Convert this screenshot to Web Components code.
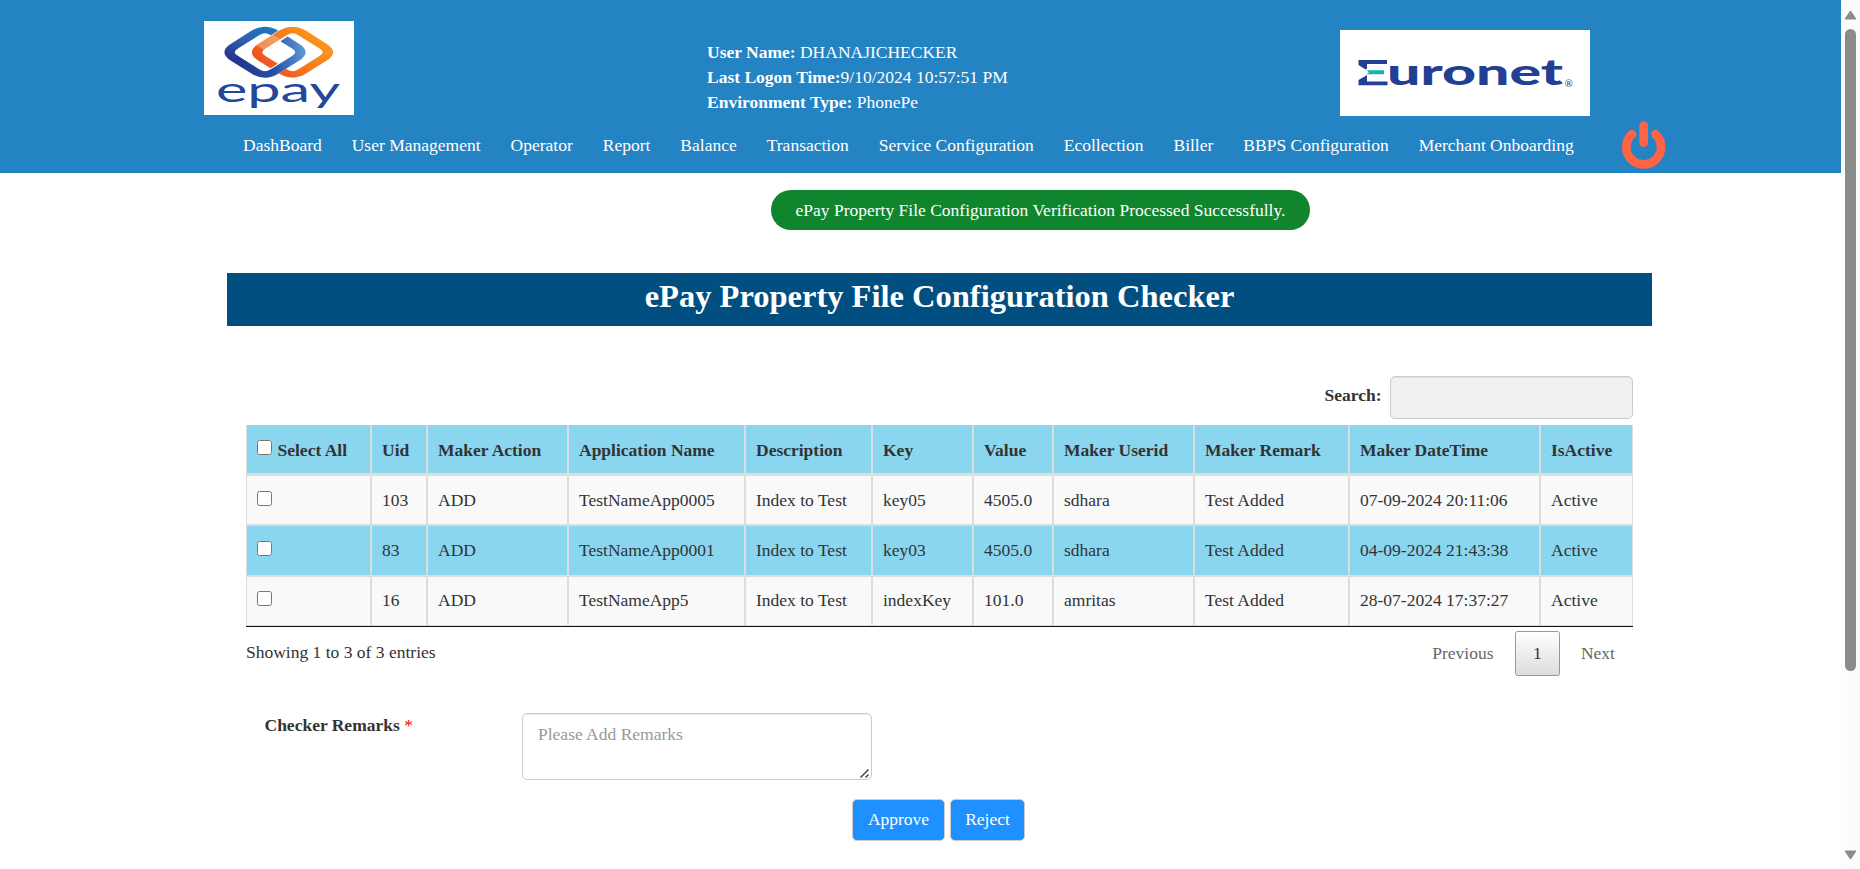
<!DOCTYPE html>
<html lang="en">
<head>
<meta charset="utf-8">
<title>ePay Property File Configuration Checker</title>
<style>
html,body{margin:0;height:100%;overflow:hidden}
body{font:17.5px/25px "Liberation Serif","Times New Roman",serif;color:#333;background:#fff}
</style>
</head>
<body>
<epay-app></epay-app>
<script>
function define(name, html, setup) {
  const t = document.createElement('template');
  t.innerHTML = '<style>*{box-sizing:border-box}:host{display:block}</style>' + html;
  customElements.define(name, class extends HTMLElement {
    constructor() {
      super();
      this.attachShadow({mode: 'open'}).append(t.content.cloneNode(true));
      if (setup) setup(this.shadowRoot, this);
    }
  });
}

define('epay-logo', `
<style>:host{width:150px;height:94px;background:#fff}svg{display:block}</style>
<svg width="150" height="94" viewBox="0 0 150 94" role="img">
  <defs>
    <linearGradient id="b" gradientUnits="userSpaceOnUse" x1="-22" y1="10" x2="8" y2="-22"><stop offset="0" stop-color="#23308c"/><stop offset=".5" stop-color="#2f5fae"/><stop offset="1" stop-color="#1b78c2"/></linearGradient>
    <linearGradient id="c" gradientUnits="userSpaceOnUse" x1="-22" y1="0" x2="24" y2="-4"><stop offset="0" stop-color="#23308c"/><stop offset=".55" stop-color="#2350a2"/><stop offset="1" stop-color="#5c94d2"/></linearGradient>
    <linearGradient id="o" gradientUnits="userSpaceOnUse" x1="-20" y1="12" x2="20" y2="-14"><stop offset="0" stop-color="#ee5023"/><stop offset=".5" stop-color="#f47b20"/><stop offset="1" stop-color="#fb971c"/></linearGradient>
  </defs>
  <g fill="none" stroke-width="6.500">
    <g transform="translate(61 31.200) scale(1.590 1)">
      <path d="M6 -19.300Q0 -25.300 -6 -19.300L-19.300 -6Q-25.300 0 -19.300 6" stroke="url(#b)"/>
      <path d="M-19.600 5.700L-6 19.300Q0 25.300 6 19.300L19.300 6Q25.300 0 19.300 -6L12 -13.300" stroke="url(#c)"/>
    </g>
    <g transform="translate(88.500 31.200) scale(1.590 1)">
      <path d="M-11.500 13.800L-19.300 6Q-25.300 0 -19.300 -6L-6 -19.300Q0 -25.300 6 -19.300L19.300 -6Q25.300 0 19.300 6L6 19.300Q0 25.300 -6.500 18.800" stroke="url(#o)"/>
      <path d="M-20.500 -4.800L-10 -15.300" stroke="#fff" stroke-opacity=".28"/>
    </g>
  </g>
  <text x="12" y="81" font-family="Lato" font-size="35" fill="#23479c" textLength="124" lengthAdjust="spacingAndGlyphs">epay</text>
</svg>`);

define('euronet-logo', `
<style>:host{width:250px;height:86px;background:#fff}svg{display:block}</style>
<svg width="250" height="86" viewBox="0 0 250 86" role="img">
  <g font-family="Lato" fill="#233f94" font-weight="900">
    <text x="14" y="55.200" font-size="36" textLength="209" lengthAdjust="spacingAndGlyphs"><tspan fill="#fff">E</tspan><tspan>uronet</tspan></text>
  </g>
  <path d="M14 28H50V57H14z" fill="#fff"/>
  <path d="M18.500 30H47V34H27V38.500L25.500 39.500L18.500 35zM18.500 55.300H47.500V51.500H33L27 51.500V45L25.500 46L18.500 50z" fill="#233f94"/>
  <path d="M26.500 40.300H44V44.200H26.500L29 42.300z" fill="#12b5ac"/>
  <text x="224.500" y="57" font-family="Lato" font-size="10" fill="#233f94">®</text>
</svg>`);

define('power-button', `
<style>:host{width:44px;height:49px}svg{display:block}</style>
<svg width="44" height="49" viewBox="0 0 44 49" fill="none" stroke="#ff6347" stroke-width="8.700" stroke-linecap="round">
<path d="M21.700 4.500V21.700M9.900 13.200A17.400 17.400 0 1 0 33.500 13.200"/></svg>`);

define('session-info', `
<style>:host{color:#fff}</style>
<div><b>User Name:</b> DHANAJICHECKER</div><div><b>Last Logon Time:</b>9/10/2024 10:57:51 PM</div><div><b>Environment Type:</b> PhonePe</div>`);

define('nav-bar', `
<style>nav{display:flex;gap:30px;color:#fff;white-space:nowrap}</style><nav></nav>`, r => {
  for (const s of ['DashBoard','User Management','Operator','Report','Balance','Transaction','Service Configuration','Ecollection','Biller','BBPS Configuration','Merchant Onboarding']) {
    const a = document.createElement('a'); a.textContent = s; r.querySelector('nav').append(a);
  }
});

define('site-header', `
<style>
:host{height:173px;background:#2483c3}
.top{height:121px;display:grid;grid-template-columns:503px 633px auto;padding-left:204px;align-items:start}
epay-logo{margin-top:21px}session-info{margin-top:40px}euronet-logo{margin-top:30px}
.bottom{display:flex;height:52px;padding-left:243px;align-items:start}
nav-bar{margin-top:12px;width:1379px}
</style>
<div class="top"><epay-logo></epay-logo><session-info></session-info><euronet-logo></euronet-logo></div>
<div class="bottom"><nav-bar></nav-bar><power-button></power-button></div>`);

define('status-pill', `
<style>:host{width:539px;height:40px;border-radius:20px;background:#10852d;color:#fff;line-height:40px;text-align:center;white-space:nowrap}</style><slot></slot>`);

define('page-title', `
<style>:host{height:53px;background:#004f80;color:#fff;text-align:center}h1{margin:0;font-size:32.5px;line-height:46px;font-weight:bold}</style><h1><slot></slot></h1>`);

define('search-box', `
<style>:host{display:flex;justify-content:flex-end;align-items:start}
b{margin:7px 8.500px 0 0}
input{width:243px;height:43px;border:1px solid #ccc;border-radius:5px;background:#f0f0f0;box-shadow:inset 0 1px 1px rgba(0,0,0,.075);padding:0}</style>
<b>Search:</b><input>`);

define('record-table', `
<style>
table{width:1387px;table-layout:fixed;border-collapse:separate;border-spacing:0;border-bottom:1px solid #111}
th,td{text-align:left;vertical-align:top;white-space:nowrap;border:1px solid #ddd;padding:12px 0 0 10px;height:50px}
th{border-top:0;border-bottom-width:2px;padding-top:13px}
tr{background:#f9f9f9}thead tr,tbody tr:nth-child(2){background:#8ad6ef}
tbody tr:nth-child(2) td{height:51px}
tbody tr:nth-child(3) td{padding-top:11px}
input{width:15px;height:15px;margin:0;display:inline-block;vertical-align:1px}
td input{vertical-align:0}
th input{margin-right:5.500px}
</style>
<table><colgroup></colgroup><thead><tr></tr></thead><tbody></tbody></table>`, r => {
  const cols = [['Select All',125],['Uid',56],['Maker Action',141],['Application Name',177],['Description',127],['Key',101],['Value',80],['Maker Userid',141],['Maker Remark',155],['Maker DateTime',191],['IsActive',93]];
  const rows = [
    ['103','ADD','TestNameApp0005','Index to Test','key05','4505.0','sdhara','Test Added','07-09-2024 20:11:06','Active'],
    ['83','ADD','TestNameApp0001','Index to Test','key03','4505.0','sdhara','Test Added','04-09-2024 21:43:38','Active'],
    ['16','ADD','TestNameApp5','Index to Test','indexKey','101.0','amritas','Test Added','28-07-2024 17:37:27','Active']];
  const box = '<input type="checkbox">';
  r.querySelector('colgroup').innerHTML = cols.map(c => `<col style="width:${c[1]}px">`).join('');
  r.querySelector('thead tr').innerHTML = cols.map((c, i) => `<th>${i ? '' : box}${c[0]}</th>`).join('');
  r.querySelector('tbody').innerHTML = rows.map(w => `<tr><td>${box}</td>${w.map(v => `<td>${v}</td>`).join('')}</tr>`).join('');
});

define('table-footer', `
<style>:host{display:flex;justify-content:space-between;align-items:start}
.info{margin-top:13px}
.pages{display:flex;color:#666;margin-top:4px;line-height:45px}
.pages span{padding:0 18px 0 21px}
.pages span:first-child{padding-right:21.500px}
.pages b{font-weight:normal;color:#333;width:45px;height:45px;line-height:43px;text-align:center;border:1px solid #979797;border-radius:2.500px;background:linear-gradient(#fff,#dcdcdc)}
</style>
<div class="info">Showing 1 to 3 of 3 entries</div>
<div class="pages"><span>Previous</span><b>1</b><span>Next</span></div>`);

define('remarks-field', `
<style>:host{display:flex;align-items:start}
label{width:257.500px;font-weight:bold}i{font-style:normal;font-weight:normal;color:red}
.box{position:relative}
textarea{display:block;width:350px;height:67px;margin:0;padding:8px 15px;border:1px solid #ccc;border-radius:5px;font:inherit;line-height:25px;box-shadow:inset 0 1px 1px rgba(0,0,0,.075);resize:none}
textarea::placeholder{color:#999}
svg{position:absolute;right:3px;bottom:2px}
</style>
<label>Checker Remarks <i>*</i></label><div class="box"><textarea placeholder="Please Add Remarks"></textarea>
<svg width="9" height="9" stroke="#444" stroke-width="1.500"><path d="M.5 8.500L8.500 .5M5.500 8.500L8.500 5.500"/></svg></div>`);

define('action-button', `
<style>:host{height:42px;border:1px solid #ccc;border-radius:5px;background:#1e90ff;color:#fff;line-height:39px;text-align:center}</style><slot></slot>`);

define('page-scrollbar', `
<style>:host{width:19px;height:869px;background:#fcfcfc;display:flex;flex-direction:column;align-items:center;padding:10px 1px 9px 0}
svg{display:block;flex:none}div{width:11px;height:642px;border-radius:6px;background:#8b8b8b;margin:9px 0 179px}</style>
<svg width="13" height="10"><path d="M6.500 1.500L11.500 8.800H1.500z" fill="#8b8b8b" stroke="#8b8b8b" stroke-width="1.500" stroke-linejoin="round"/></svg>
<div></div>
<svg width="13" height="10"><path d="M6.500 8.500L11.500 1.200H1.500z" fill="#8b8b8b" stroke="#8b8b8b" stroke-width="1.500" stroke-linejoin="round"/></svg>`);

define('epay-app', `
<style>
:host{display:flex;height:869px;width:1860px}
main{width:1841px}
status-pill{margin:17px 0 0 771px}
page-title{margin:43px 189px 0 227px}
.grid{margin:50px 208px 0 246px}
record-table{margin-top:6px}
remarks-field{margin:37px 0 0 264.500px}
.actions{display:flex;gap:5px;margin:19px 0 0 852px}
.a{width:93px}.r{width:75px}
</style>
<main>
<site-header></site-header>
<status-pill>ePay Property File Configuration Verification Processed Successfully.</status-pill>
<page-title>ePay Property File Configuration Checker</page-title>
<div class="grid"><search-box></search-box><record-table></record-table><table-footer></table-footer></div>
<remarks-field></remarks-field>
<div class="actions"><action-button class="a">Approve</action-button><action-button class="r">Reject</action-button></div>
</main>
<page-scrollbar></page-scrollbar>`);
</script>
</body>
</html>
